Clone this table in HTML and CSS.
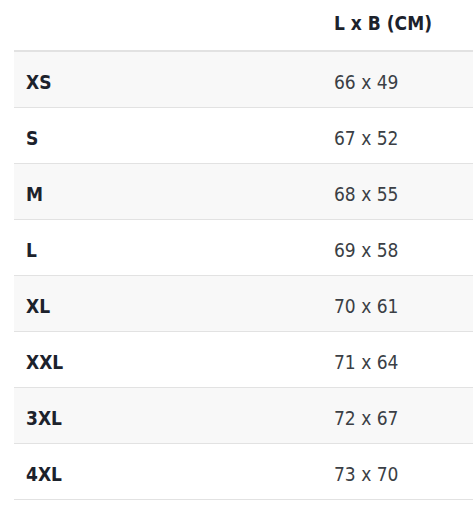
FILE: index.html
```html
<!DOCTYPE html>
<html lang="en">
<head>
<meta charset="utf-8">
<title>Size chart</title>
<link rel="stylesheet" href="styles.css">
</head>
<body>
<table class="size-table">
  <thead>
    <tr><th class="col-size"></th><th class="col-dim">L x B (CM)</th></tr>
  </thead>
  <tbody>
    <tr><td class="size">XS</td><td class="dim">66 x 49</td></tr>
    <tr><td class="size">S</td><td class="dim">67 x 52</td></tr>
    <tr><td class="size">M</td><td class="dim">68 x 55</td></tr>
    <tr><td class="size">L</td><td class="dim">69 x 58</td></tr>
    <tr><td class="size">XL</td><td class="dim">70 x 61</td></tr>
    <tr><td class="size">XXL</td><td class="dim">71 x 64</td></tr>
    <tr><td class="size">3XL</td><td class="dim">72 x 67</td></tr>
    <tr><td class="size">4XL</td><td class="dim">73 x 70</td></tr>
  </tbody>
</table>
</body>
</html>
```
FILE: styles.css
```css
html, body {
  margin: 0;
  padding: 0;
  background: #ffffff;
}
body {
  font-family: "DejaVu Sans Condensed", "Roboto", "Liberation Sans", sans-serif;
  color: #1c222c;
}
.size-table {
  margin-left: 14px;
  width: 459px;
  border-collapse: collapse;
  table-layout: fixed;
}
.col-size {
  width: 320px;
}
.size-table th {
  height: 51px;
  padding: 0 0 5px 0;
  text-align: left;
  font-size: 19px;
  font-weight: 700;
  color: #1c222c;
  border-bottom: 2px solid #e2e2e2;
  box-sizing: border-box;
}
.size-table td {
  height: 49px;
  padding: 6px 0 0 0;
  border-bottom: 1px solid #e2e2e2;
  font-size: 19px;
  line-height: 1;
}
.size-table tbody tr:nth-child(odd) td {
  background: #f8f8f8;
}
.size {
  padding-left: 12px !important;
  font-weight: 700;
  color: #1c222c;
}
.dim {
  color: #3b3f45;
  font-weight: 400;
}
```
